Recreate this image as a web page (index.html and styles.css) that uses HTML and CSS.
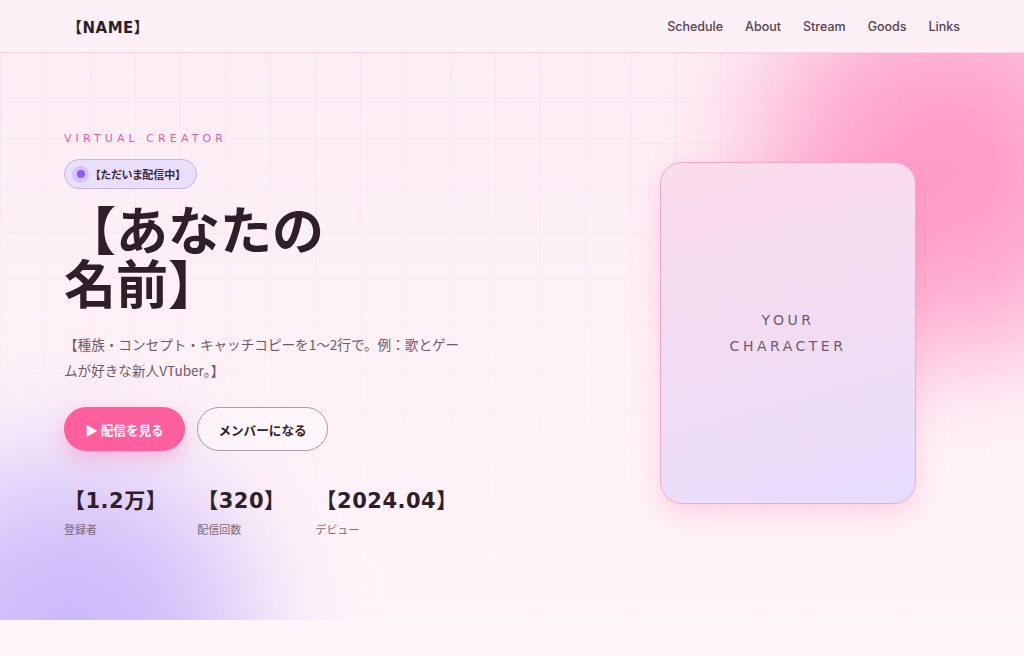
FILE: index.html
```html
<!DOCTYPE html>
<html lang="ja">
<head>
<meta charset="utf-8">
<title>【NAME】</title>
<link rel="stylesheet" href="styles.css">
</head>
<body>
<header class="site-header">
  <div class="logo">【NAME】</div>
  <nav class="nav">
    <a href="#">Schedule</a>
    <a href="#">About</a>
    <a href="#">Stream</a>
    <a href="#">Goods</a>
    <a href="#">Links</a>
  </nav>
</header>

<section class="hero">
  <div class="hero-grid"></div>
  <div class="blob blob-pink"></div>
  <div class="blob blob-purple"></div>

  <div class="hero-inner">
    <div class="hero-text">
      <p class="eyebrow">VIRTUAL CREATOR</p>
      <span class="live-badge"><span class="live-dot"></span>【ただいま配信中】</span>
      <h1 class="hero-title">【あなたの名前】</h1>
      <p class="hero-lead">【種族・コンセプト・キャッチコピーを1〜2行で。例：歌とゲームが好きな新人VTuber。】</p>
      <div class="actions">
        <a class="btn btn-primary" href="#">▶ 配信を見る</a>
        <a class="btn btn-outline" href="#">メンバーになる</a>
      </div>
      <div class="stats">
        <div class="stat"><div class="stat-num">【1.2万】</div><div class="stat-label">登録者</div></div>
        <div class="stat"><div class="stat-num">【320】</div><div class="stat-label">配信回数</div></div>
        <div class="stat"><div class="stat-num">【2024.04】</div><div class="stat-label">デビュー</div></div>
      </div>
    </div>
    <div class="hero-visual">
      <div class="char-card">
        <span class="char-text">YOUR<br>CHARACTER</span>
      </div>
    </div>
  </div>
</section>
</body>
</html>
```

FILE: styles.css
```css
* { box-sizing: border-box; }

body {
  margin: 0;
  background: #fff6fb;
  color: #2e1f29;
  font-family: "Noto Sans CJK JP", "Noto Sans", sans-serif;
}

a { text-decoration: none; color: inherit; }

/* header */
.site-header {
  height: 53px;
  display: flex;
  align-items: center;
  justify-content: space-between;
  padding: 0 64px;
  background: #fdf0f6;
  border-bottom: 1px solid #f7d9e6;
  position: relative;
  z-index: 2;
}

.logo {
  padding-left: 3px;
  font-family: "DejaVu Sans", "Noto Sans CJK JP", sans-serif;
  font-weight: 700;
  font-size: 15px;
  letter-spacing: 0.5px;
  color: #2e1f29;
}

.nav {
  display: flex;
  gap: 22px;
}

.nav a {
  font-family: "Inter", "Noto Sans", sans-serif;
  font-size: 12.5px;
  font-weight: 500;
  color: #55424d;
}

/* hero */
.hero {
  position: relative;
  overflow: hidden;
  min-height: 567px;
  display: flex;
  align-items: center;
  background: linear-gradient(180deg, #fdeef5 0%, #fff4f9 100%);
}

.hero-grid {
  position: absolute;
  inset: 0;
  background-image:
    linear-gradient(to right, rgba(240, 190, 214, 0.22) 1px, transparent 1px),
    linear-gradient(to bottom, rgba(240, 190, 214, 0.22) 1px, transparent 1px);
  background-size: 45px 45px;
  -webkit-mask-image: linear-gradient(180deg, #000 0%, rgba(0,0,0,0.35) 55%, transparent 100%);
  mask-image: linear-gradient(180deg, #000 0%, rgba(0,0,0,0.35) 55%, transparent 100%);
}

.blob {
  position: absolute;
  border-radius: 50%;
  filter: blur(40px);
}

.blob-pink {
  width: 520px;
  height: 440px;
  left: 660px;
  top: -100px;
  background: radial-gradient(circle at 55% 50%, rgba(255, 140, 190, 0.95) 0%, rgba(255, 150, 196, 0.75) 35%, rgba(255, 180, 210, 0) 70%);
}

.blob-purple {
  width: 480px;
  height: 420px;
  left: -170px;
  top: 330px;
  background: radial-gradient(circle at 50% 62%, rgba(198, 178, 250, 1) 0%, rgba(206, 188, 250, 0.85) 35%, rgba(220, 205, 250, 0) 70%);
}

.hero-inner {
  position: relative;
  z-index: 1;
  width: 100%;
  padding: 0 64px;
  display: grid;
  grid-template-columns: 1fr 344px;
  align-items: center;
}

.hero-text {
  padding-bottom: 4px;
}

.eyebrow {
  margin: 0 0 14px;
  font-family: "DejaVu Sans", sans-serif;
  font-size: 11px;
  letter-spacing: 4.1px;
  color: #e8609a;
}

.live-badge {
  display: inline-flex;
  align-items: center;
  gap: 6px;
  height: 30px;
  padding: 0 15px 0 7px;
  border-radius: 15px;
  background: #eadffb;
  border: 1px solid #c8b2ef;
  font-size: 11px;
  font-weight: 700;
  font-feature-settings: "palt";
  color: #3b2a36;
}

.live-dot {
  width: 17px;
  height: 17px;
  border-radius: 50%;
  background: #d5c4f7;
  display: inline-flex;
  align-items: center;
  justify-content: center;
}

.live-dot::after {
  content: "";
  width: 8px;
  height: 8px;
  border-radius: 50%;
  background: #8b5cf6;
}

.hero-title {
  margin: 12px 0 0;
  max-width: 300px;
  font-size: 52px;
  line-height: 54px;
  font-weight: 700;
  color: #2e1f29;
}

.hero-lead {
  margin: 22px 0 0;
  max-width: 400px;
  font-size: 13.6px;
  line-height: 26px;
  color: #6d5a67;
}

.actions {
  display: flex;
  gap: 12px;
  margin-top: 24px;
}

.btn {
  height: 44px;
  display: inline-flex;
  align-items: center;
  justify-content: center;
  border-radius: 22px;
  font-size: 12.6px;
  font-weight: 700;
}

.btn-primary {
  width: 121px;
  background: #ff5f9c;
  color: #fff;
  box-shadow: 0 8px 20px rgba(255, 95, 156, 0.3);
}

.btn-outline {
  width: 131px;
  border: 1px solid #a99ea6;
  background: rgba(255, 255, 255, 0.35);
  color: #2e1f29;
}

.stats {
  display: flex;
  gap: 30px;
  margin-top: 36px;
}

.stat-num {
  font-family: "DejaVu Sans", "Noto Sans CJK JP", sans-serif;
  font-size: 21px;
  font-weight: 700;
  letter-spacing: 0.5px;
  color: #2e1f29;
  line-height: 28px;
}

.stat-label {
  margin-top: 6px;
  font-size: 11px;
  color: #7a6874;
}

/* character card */
.hero-visual {
  display: flex;
  justify-content: center;
  padding-bottom: 7px;
}

.char-card {
  width: 256px;
  height: 342px;
  border-radius: 22px;
  border: 1px solid #f2a9c9;
  background: linear-gradient(165deg, #fcdcec 0%, #f2dcf2 50%, #e7dcfd 100%);
  box-shadow: 0 10px 28px rgba(250, 120, 170, 0.28);
  display: flex;
  align-items: center;
  justify-content: center;
}

.char-text {
  text-align: center;
  font-family: "DejaVu Sans", sans-serif;
  font-size: 14px;
  line-height: 26px;
  letter-spacing: 3.5px;
  color: #6e5c67;
}
```
